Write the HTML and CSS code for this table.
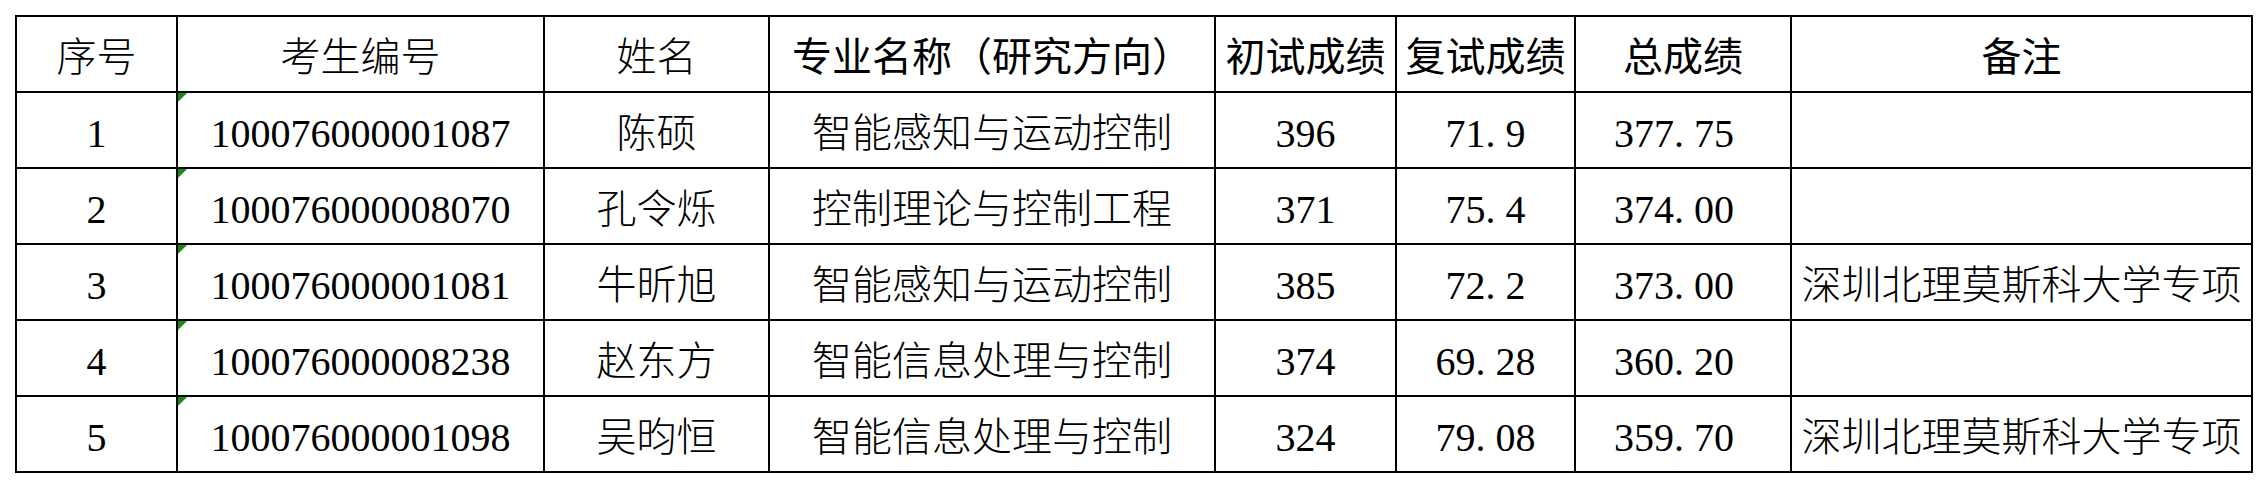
FILE: index.html
```html
<!DOCTYPE html>
<html lang="zh-CN">
<head>
<meta charset="utf-8">
<title>复试成绩</title>
<link rel="stylesheet" href="styles.css">
</head>
<body>
<div class="sheet" role="table">
  <div class="c song" role="columnheader">序号</div>
  <div class="c song" role="columnheader">考生编号</div>
  <div class="c song" role="columnheader">姓名</div>
  <div class="c hei" role="columnheader">专业名称（研究方向）</div>
  <div class="c hei" role="columnheader">初试成绩</div>
  <div class="c hei" role="columnheader">复试成绩</div>
  <div class="c hei" role="columnheader">总成绩</div>
  <div class="c hei" role="columnheader">备注</div>

  <div class="c num">1</div>
  <div class="c num id">100076000001087</div>
  <div class="c song">陈硕</div>
  <div class="c song">智能感知与运动控制</div>
  <div class="c num">396</div>
  <div class="c num">71<span class="dot">.</span>9</div>
  <div class="c num tot">377<span class="dot">.</span>75</div>
  <div class="c song"></div>

  <div class="c num">2</div>
  <div class="c num id">100076000008070</div>
  <div class="c song">孔令烁</div>
  <div class="c song">控制理论与控制工程</div>
  <div class="c num">371</div>
  <div class="c num">75<span class="dot">.</span>4</div>
  <div class="c num tot">374<span class="dot">.</span>00</div>
  <div class="c song"></div>

  <div class="c num">3</div>
  <div class="c num id">100076000001081</div>
  <div class="c song">牛昕旭</div>
  <div class="c song">智能感知与运动控制</div>
  <div class="c num">385</div>
  <div class="c num">72<span class="dot">.</span>2</div>
  <div class="c num tot">373<span class="dot">.</span>00</div>
  <div class="c song">深圳北理莫斯科大学专项</div>

  <div class="c num">4</div>
  <div class="c num id">100076000008238</div>
  <div class="c song">赵东方</div>
  <div class="c song">智能信息处理与控制</div>
  <div class="c num">374</div>
  <div class="c num">69<span class="dot">.</span>28</div>
  <div class="c num tot">360<span class="dot">.</span>20</div>
  <div class="c song"></div>

  <div class="c num">5</div>
  <div class="c num id">100076000001098</div>
  <div class="c song">吴昀恒</div>
  <div class="c song">智能信息处理与控制</div>
  <div class="c num">324</div>
  <div class="c num">79<span class="dot">.</span>08</div>
  <div class="c num tot">359<span class="dot">.</span>70</div>
  <div class="c song">深圳北理莫斯科大学专项</div>
</div>
</body>
</html>
```
FILE: styles.css
```css
html, body {
  margin: 0;
  padding: 0;
  background: #ffffff;
}

.sheet {
  display: grid;
  grid-template-columns: 161px 367px 225px 446px 181px 179px 216px 461px;
  grid-auto-rows: 76px;
  width: max-content;
  margin: 15px 0 0 15px;
  border-top: 2px solid #000;
  border-left: 2px solid #000;
  color: #000;
}

.c {
  box-sizing: border-box;
  position: relative;
  display: flex;
  align-items: center;
  justify-content: center;
  border-right: 2px solid #000;
  border-bottom: 2px solid #000;
  font-size: 40px;
  white-space: nowrap;
  overflow: hidden;
}

.song {
  font-family: "Noto Sans CJK SC", sans-serif;
  font-weight: 300;
}

.hei {
  font-family: "Noto Sans CJK SC", sans-serif;
  font-weight: 400;
}

.num {
  font-family: "Liberation Serif", "Noto Sans CJK SC", serif;
  padding-top: 7px;
}

.dot {
  display: inline-block;
  width: 0.5em;
  text-align: left;
}

.tot {
  padding-right: 18px;
}

.id::before {
  content: "";
  position: absolute;
  top: 0;
  left: 0;
  width: 0;
  height: 0;
  border-top: 9px solid #17891b;
  border-right: 9px solid transparent;
}
```
